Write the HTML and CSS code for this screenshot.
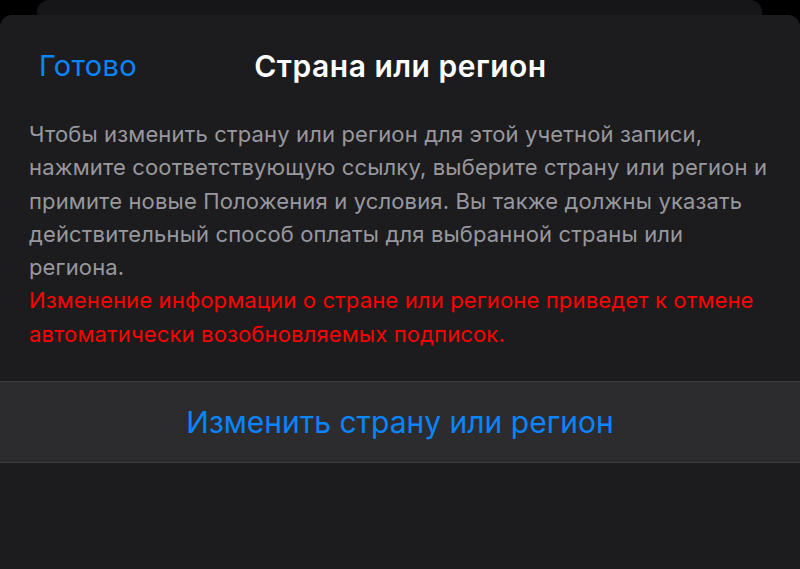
FILE: index.html
```html
<!DOCTYPE html>
<html lang="ru">
<head>
<meta charset="utf-8">
<link rel="stylesheet" href="styles.css">
</head>
<body>
<div class="back-card"></div>
<div class="sheet">
  <header class="nav">
    <span class="nav-done">Готово</span>
    <h1 class="nav-title">Страна или регион</h1>
    <span class="nav-spacer"></span>
  </header>
  <div class="info">
    <p class="info-text">Чтобы изменить страну или регион для этой учетной записи, нажмите соответствующую ссылку, выберите страну или регион и примите новые Положения и условия. Вы также должны указать действительный способ оплаты для выбранной страны или региона.</p>
    <p class="info-warning">Изменение информации о стране или регионе приведет к отмене автоматически возобновляемых подписок.</p>
  </div>
  <div class="action-row">
    <span class="action-link">Изменить страну или регион</span>
  </div>
</div>
</body>
</html>
```
FILE: styles.css
```css
html, body {
  margin: 0;
  padding: 0;
}
body {
  background: #000;
  width: 800px;
  height: 569px;
  overflow: hidden;
  font-family: Inter, "Noto Sans", sans-serif;
}
.back-card {
  height: 15px;
  margin: 0 38px 0 37px;
  background: #161618;
  border-radius: 12px 12px 0 0;
}
.sheet {
  background: #1c1c1e;
  border-radius: 12px 12px 0 0;
  height: 554px;
}
.nav {
  display: grid;
  grid-template-columns: 1fr auto 1fr;
  align-items: center;
  padding: 33px 38px 0 39px;
  height: 36px;
  line-height: 36px;
}
.nav-done {
  color: #0a84ff;
  font-size: 29px;
  letter-spacing: 0.3px;
  justify-self: start;
}
.nav-title {
  margin: 0;
  color: #fff;
  font-size: 30px;
  font-weight: 600;
  letter-spacing: 0.5px;
}
.info {
  padding: 34px 29px 0 29px;
}
.info-text, .info-warning {
  margin: 0;
  font-size: 22px;
  letter-spacing: 0.15px;
  line-height: 33.3px;
}
.info-text {
  color: #98989e;
}
.info-warning {
  color: #ff0000;
}
.action-row {
  margin-top: 30px;
  height: 80px;
  border-top: 1px solid #3d3d40;
  border-bottom: 1px solid #3d3d40;
  background: #2c2c2e;
  display: flex;
  align-items: center;
  justify-content: center;
}
.action-link {
  color: #0a84ff;
  font-size: 30px;
}
```
